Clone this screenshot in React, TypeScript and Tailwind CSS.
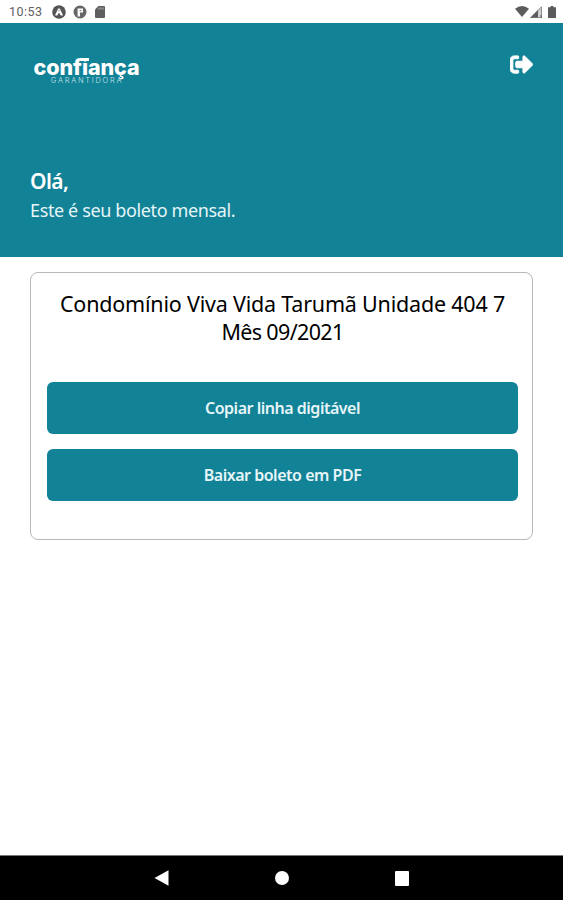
import { FaSignOutAlt } from "react-icons/fa";

const StatusBar = () => (
  <div className="flex h-[23px] shrink-0 items-center justify-between bg-white pl-[9px] pr-[7px] text-[#616161]">
    <div className="flex items-center">
      <span className="w-[43px] pt-[2px] font-[Roboto] text-[12.5px] leading-none tracking-[0.5px]">10:53</span>
      <svg className="h-[14px] w-[14px]" viewBox="0 0 14 14">
        <circle cx="7" cy="7" r="6.8" fill="#555" />
        <path d="M3.8 10 L6.6 4 H7.4 L10.2 10 L9 9.8 L7 6.4 L5 9.8Z" fill="none" stroke="#fff" strokeWidth="1.2" strokeLinejoin="round" />
      </svg>
      <svg className="ml-[7px] h-[14px] w-[14px]" viewBox="0 0 14 14">
        <circle cx="7" cy="7" r="6.5" fill="#666" />
        <path d="M4.6 11.5 V3.5 H10 V7.5 H7 V11.5Z" fill="#fff" />
        <path d="M6.6 5.2 H8.4 V6.2 H6.6Z" fill="#666" />
      </svg>
      <svg className="ml-[8px] h-[12px] w-[10px]" viewBox="0 0 10 12">
        <path d="M3.4 0 H9 Q10 0 10 1 V11 Q10 12 9 12 H1 Q0 12 0 11 V3.4Z" fill="#5f5f5f" />
        <path d="M4 1.5 V3.5 M6 1.5 V3.5 M8 1.5 V3.5" stroke="#ccc" strokeWidth="0.8" />
      </svg>
    </div>
    <div className="flex items-center">
      <svg className="h-[11px] w-[14px]" viewBox="0 0 14 11">
        <path d="M0 2.8 Q7 -2.8 14 2.8 L7 11Z" fill="#5c5c5c" />
      </svg>
      <svg className="ml-[1px] h-[12px] w-[12px]" viewBox="0 0 12 12">
        <path d="M0 12 L12 0 V12Z" fill="#d0d0d0" />
        <path d="M0 12 L8 4 V12Z M10.5 9 H12 V12 H10.5Z" fill="#5c5c5c" />
        <path d="M0.8 11.6 L11.6 0.8 V11.6Z" fill="none" stroke="#777" strokeWidth="0.8" />
      </svg>
      <svg className="ml-[6px] h-[12px] w-[8px]" viewBox="0 0 8 12">
        <path d="M2.5 0 H5.5 V1.3 H8 V12 H0 V1.3 H2.5Z" fill="#5c5c5c" />
      </svg>
    </div>
  </div>
);

const Logo = () => (
  <div className="relative mt-[33px] ml-[3px] flex w-[107px] flex-col items-center whitespace-nowrap">
    <span className="font-['Inter'] text-[21.5px] font-extrabold leading-[22px] tracking-[-0.1px]">confiança</span>
    {/* bar joining the f and the i */}
    <span className="absolute left-[47px] top-[2px] h-[3px] w-[9px] bg-white" />
    <span className="-mt-[1px] pl-[1px] font-['Inter'] text-[7.5px] font-light leading-[8px] tracking-[1.7px] text-[#c5e2e8]">
      GARANTIDORA
    </span>
  </div>
);

const Header = () => (
  <header className="flex h-[234px] shrink-0 flex-col bg-[#128297] px-[30px] text-white">
    <div className="flex h-[141px] items-start justify-between">
      <Logo />
      <button className="mt-[30px]">
        <FaSignOutAlt className="h-[23px] w-[23px] stroke-white [stroke-width:22]" />
      </button>
    </div>
    <p className="text-[21px] font-semibold leading-[34px] tracking-[-0.6px]">Olá,</p>
    <p className="-mt-px text-[18px] leading-[26px] tracking-[-0.37px] text-[#e5f5f8]">Este é seu boleto mensal.</p>
  </header>
);

const ActionButton = ({ label }: { label: string }) => (
  <button className="flex h-[52px] w-full items-center justify-center rounded-[6px] bg-[#128297] pb-px text-[16px] font-semibold tracking-[-0.48px] text-[#e5f5f8]">
    {label}
  </button>
);

const NavigationBar = () => (
  <nav className="flex h-[45px] shrink-0 items-center justify-between border-t border-[#777] bg-black px-[154px]">
    <svg className="h-[16px] w-[15px]" viewBox="0 0 15 16">
      <path d="M0.5 8 L14.5 0.3 V15.7Z" fill="#fff" />
    </svg>
    <svg className="h-[14px] w-[14px]" viewBox="0 0 14 14">
      <circle cx="7" cy="7" r="7" fill="#fff" />
    </svg>
    <div className="h-[15px] w-[14px] rounded-[1px] bg-white" />
  </nav>
);

const App = () => {
  return (
    <div className="flex h-[900px] w-[563px] flex-col overflow-hidden bg-white font-['Noto_Sans',sans-serif]">
      <StatusBar />
      <Header />
      <main className="flex-1 px-[30px] pt-[15px]">
        <section className="h-[268px] rounded-[8px] border border-[#b8b8b8] pl-4 pr-[14px] pt-[17px]">
          <h1 className="whitespace-nowrap text-center text-[21.5px] leading-[28px] tracking-[-0.2px] text-black">
            Condomínio Viva Vida Tarumã Unidade 404 7
            <br />
            <span className="tracking-[-0.65px]">Mês 09/2021</span>
          </h1>
          <div className="mt-[36px] flex flex-col gap-[15px]">
            <ActionButton label="Copiar linha digitável" />
            <ActionButton label="Baixar boleto em PDF" />
          </div>
        </section>
      </main>
      <NavigationBar />
    </div>
  );
};

export default App;
